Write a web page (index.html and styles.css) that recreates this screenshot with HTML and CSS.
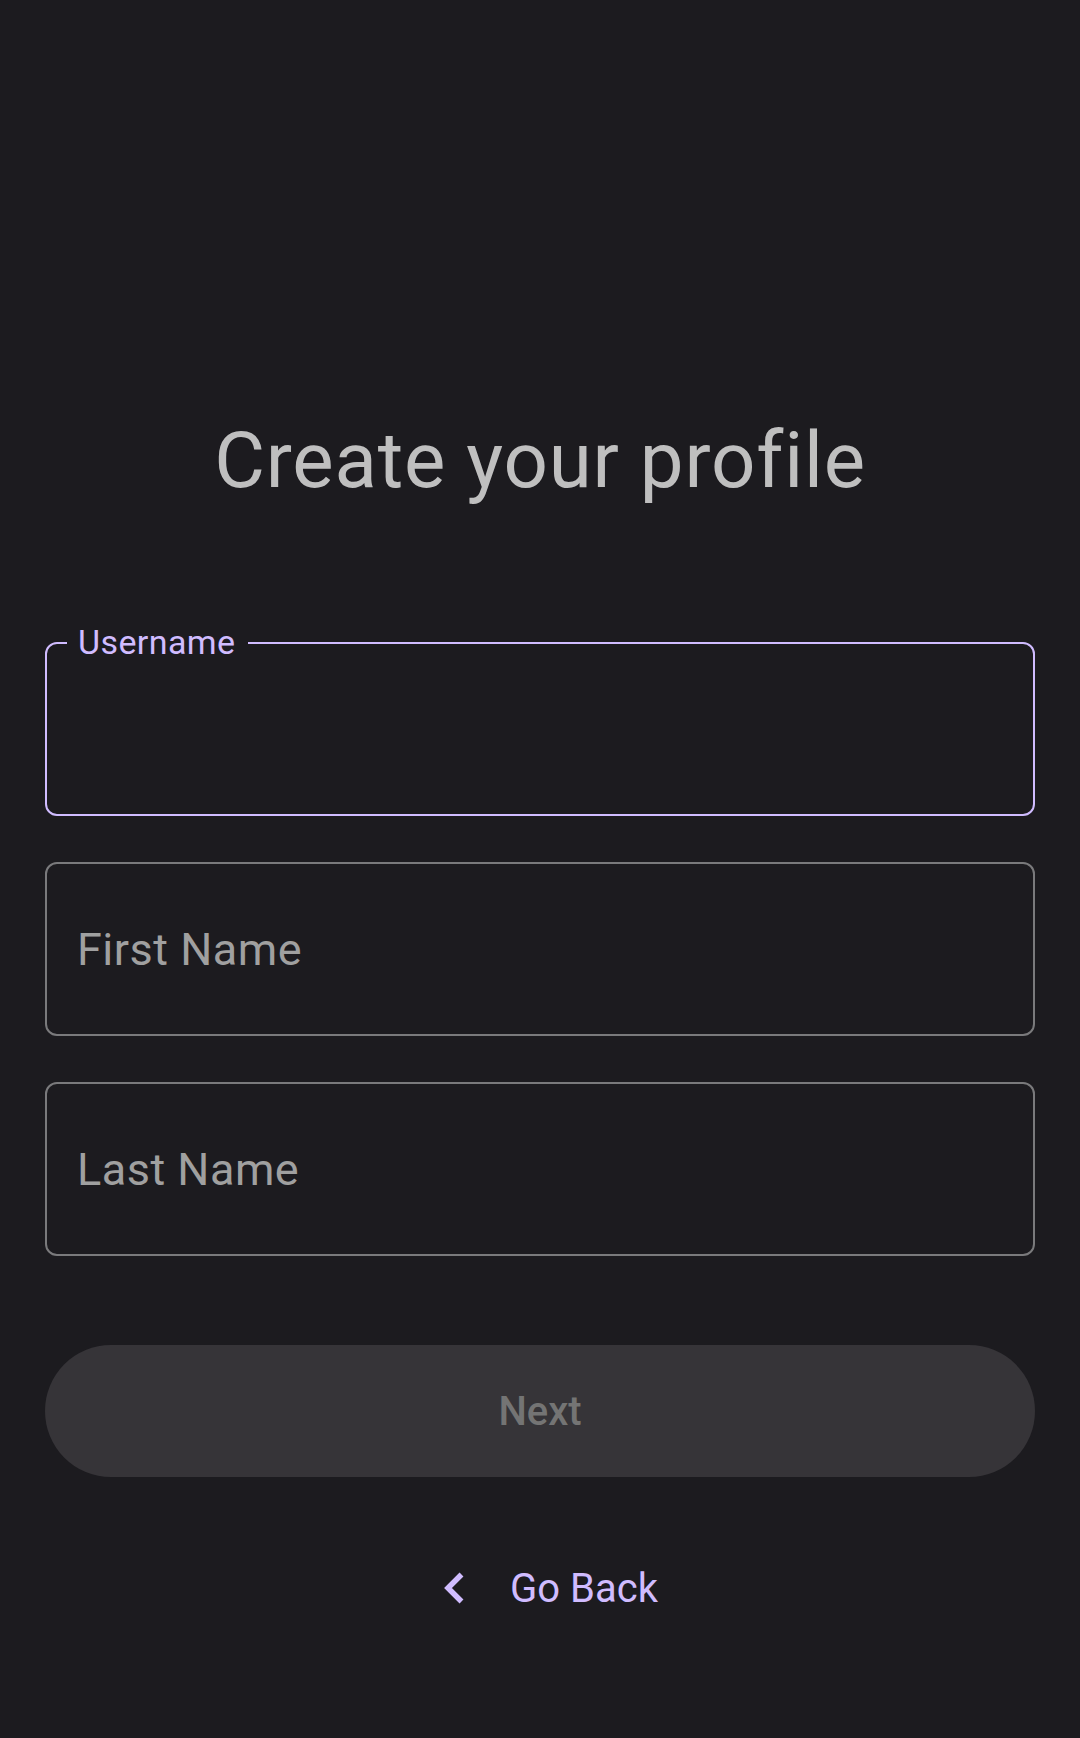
FILE: index.html
```html
<!DOCTYPE html>
<html lang="en">
<head>
<meta charset="utf-8">
<title>Create your profile</title>
<link rel="stylesheet" href="styles.css">
</head>
<body>
<main class="screen">
  <h1 class="title">Create your profile</h1>
  <form class="form">
    <div class="field field-focused">
      <span class="field-label">Username</span>
      <input class="field-input" type="text" aria-label="Username">
    </div>
    <div class="field">
      <input class="field-input" type="text" placeholder="First Name">
    </div>
    <div class="field">
      <input class="field-input" type="text" placeholder="Last Name">
    </div>
    <button class="btn-next" type="button" disabled>Next</button>
  </form>
  <button class="btn-back" type="button">
    <svg class="back-icon" width="24" height="34" viewBox="0 0 24 34" aria-hidden="true">
      <polyline points="19.5,3.5 6,17 19.5,30.5" fill="none" stroke="#d0bcff" stroke-width="5.5" stroke-linejoin="miter"/>
    </svg>
    <span>Go Back</span>
  </button>
</main>
</body>
</html>
```

FILE: styles.css
```css
html, body {
  margin: 0;
  padding: 0;
  background: #1c1b1f;
}

body {
  font-family: Roboto, "Noto Sans", "Liberation Sans", sans-serif;
  min-height: 1738px;
}

.screen {
  display: flex;
  flex-direction: column;
  align-items: stretch;
  padding: 416px 45px 0 45px;
}

.title {
  margin: 0;
  font-size: 78px;
  line-height: 90px;
  font-weight: 400;
  color: #bfbfbf;
  text-align: center;
  letter-spacing: 0.8px;
}

.form {
  display: flex;
  flex-direction: column;
  gap: 46px;
  margin-top: 136px;
}

.field {
  position: relative;
  height: 174px;
  box-sizing: border-box;
  border: 2px solid #7a7a7c;
  border-radius: 12px;
  display: flex;
  align-items: center;
}

.field-focused {
  border: 2.5px solid #d0bcff;
}

.field-label {
  position: absolute;
  top: -22px;
  left: 20px;
  padding: 0 13px 0 11px;
  background: #1c1b1f;
  color: #d0bcff;
  font-size: 34px;
  line-height: 40px;
  letter-spacing: 0.4px;
}

.field-input {
  width: 100%;
  height: 100%;
  box-sizing: border-box;
  border: none;
  outline: none;
  background: transparent;
  padding: 0 0 0 30px;
  font-family: inherit;
  font-size: 45px;
  letter-spacing: 0.5px;
  color: #e6e1e5;
}

.field-focused .field-input {
  padding-left: 29.5px;
}

.field-input::placeholder {
  color: #a0a0a0;
  opacity: 1;
}

.btn-next {
  margin-top: 43px;
  height: 132px;
  border: none;
  border-radius: 66px;
  background: #363438;
  color: #747474;
  font-family: inherit;
  font-size: 40px;
  font-weight: 500;
  cursor: default;
}

.btn-back {
  align-self: center;
  margin-top: 56px;
  height: 110px;
  display: flex;
  align-items: center;
  gap: 44px;
  padding: 0 0 0 20px;
  border: none;
  background: transparent;
  color: #d0bcff;
  font-family: inherit;
  font-size: 40px;
  font-weight: 400;
}

.back-icon {
  display: block;
}
```
